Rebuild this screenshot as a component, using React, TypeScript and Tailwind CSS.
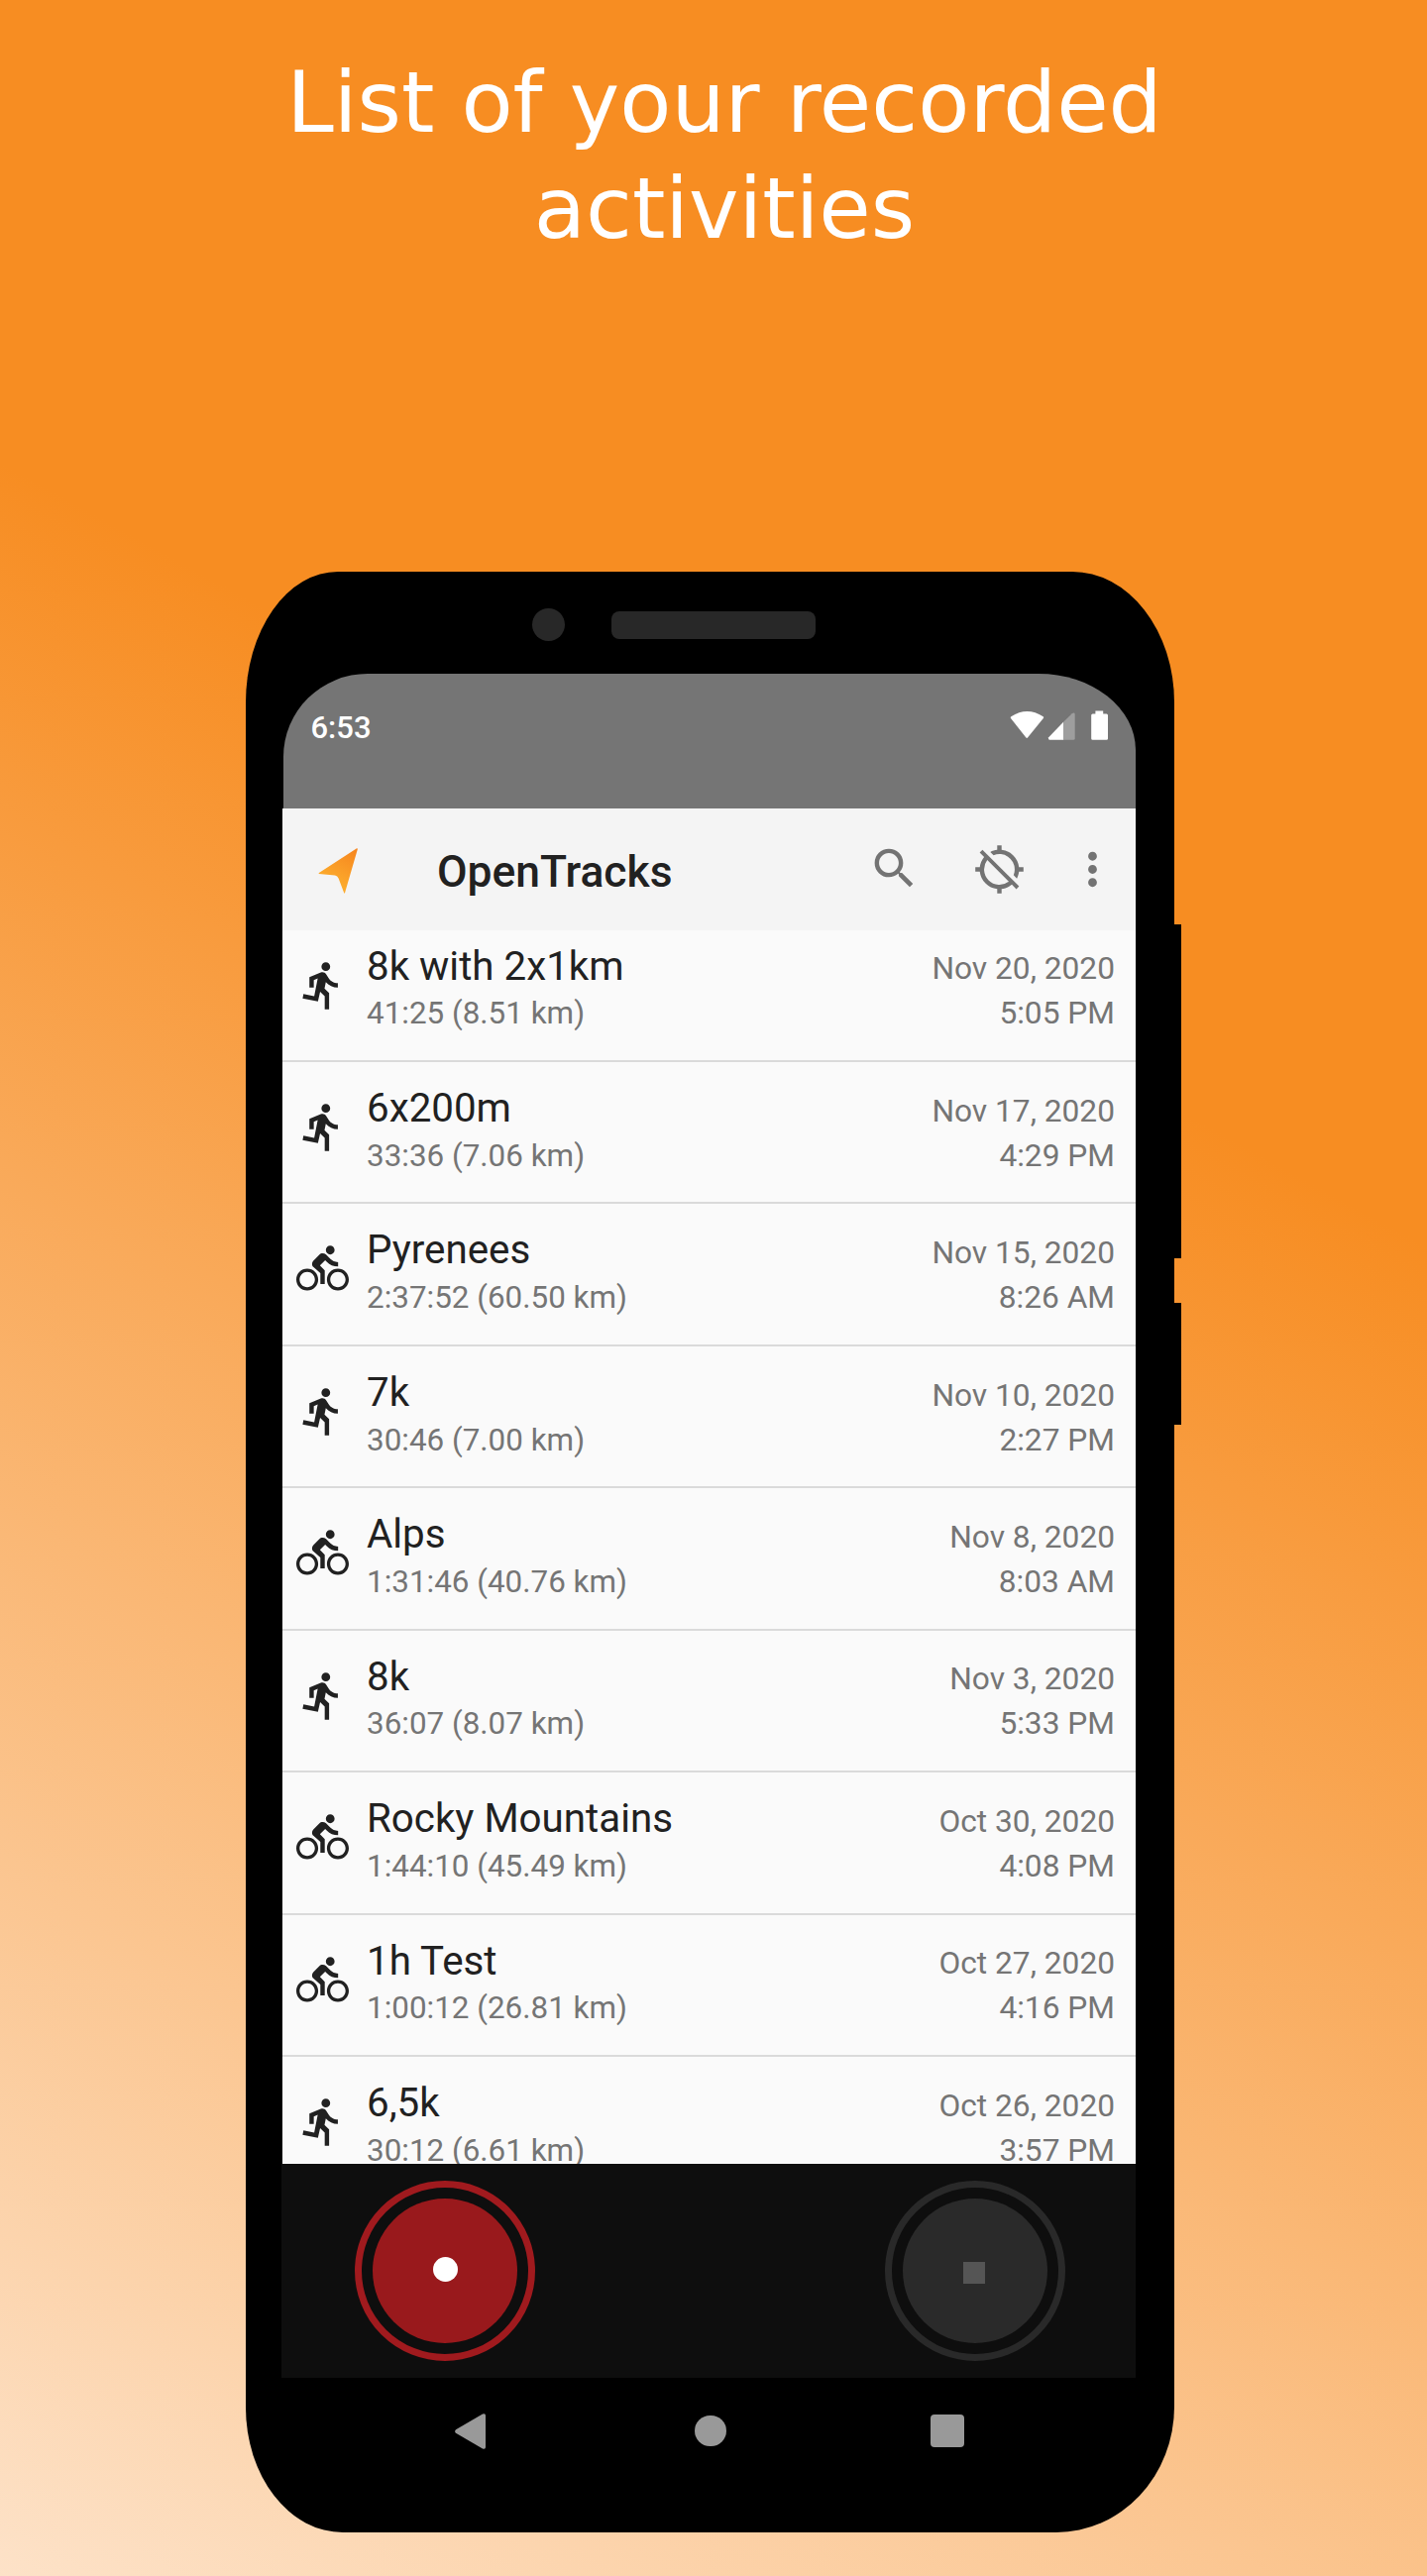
import { MdDirectionsBike, MdDirectionsRun, MdGpsOff, MdMoreVert, MdSearch } from "react-icons/md";

type Track = { sport: "run" | "bike"; name: string; stats: string; date: string; time: string };

const tracks: Track[] = [
  { sport: "run", name: "8k with 2x1km", stats: "41:25 (8.51 km)", date: "Nov 20, 2020", time: "5:05 PM" },
  { sport: "run", name: "6x200m", stats: "33:36 (7.06 km)", date: "Nov 17, 2020", time: "4:29 PM" },
  { sport: "bike", name: "Pyrenees", stats: "2:37:52 (60.50 km)", date: "Nov 15, 2020", time: "8:26 AM" },
  { sport: "run", name: "7k", stats: "30:46 (7.00 km)", date: "Nov 10, 2020", time: "2:27 PM" },
  { sport: "bike", name: "Alps", stats: "1:31:46 (40.76 km)", date: "Nov 8, 2020", time: "8:03 AM" },
  { sport: "run", name: "8k", stats: "36:07 (8.07 km)", date: "Nov 3, 2020", time: "5:33 PM" },
  { sport: "bike", name: "Rocky Mountains", stats: "1:44:10 (45.49 km)", date: "Oct 30, 2020", time: "4:08 PM" },
  { sport: "bike", name: "1h Test", stats: "1:00:12 (26.81 km)", date: "Oct 27, 2020", time: "4:16 PM" },
  { sport: "run", name: "6,5k", stats: "30:12 (6.61 km)", date: "Oct 26, 2020", time: "3:57 PM" },
];

function StatusIcons() {
  return (
    <svg width="100" height="30" viewBox="0 0 100 30" className="mt-[37px]" fill="#fff">
      <path d="M1.3 6.2Q17.5-4.2 33.7 6.2Q34.6 6.9 33.8 7.9L18 27.6Q17.2 28.4 16.4 27.6L1 7.9Q.3 6.9 1.3 6.2Z" />
      <path d="M54.3 11.5V29.8H40Q38.4 29.4 39.2 27.2Z" />
      <path d="M54.3 11.5L62.8 3.2Q65.5 1.6 65.7 4V28.5Q65.6 29.8 64.4 29.8H54.3Z" fill="#9e9e9e" />
      <path d="M86.4.5H94.2V3.6H97.6Q99 3.7 99 5V28.4Q99 29.8 97.6 29.8H83.6Q82.2 29.8 82.2 28.4V5Q82.2 3.7 83.6 3.6H86.4Z" />
    </svg>
  );
}

function Logo() {
  return (
    <svg width="40" height="46" viewBox="0 0 40 46" className="mt-[40px] ml-[36px] shrink-0">
      <defs>
        <linearGradient id="logo" x1="34" y1="0" x2="16" y2="34" gradientUnits="userSpaceOnUse">
          <stop offset="0" stopColor="#f6861f" />
          <stop offset="1" stopColor="#fcaa2c" />
        </linearGradient>
      </defs>
      <path d="M39 .3Q40 0 39.8 1.2L27 45.3Q26.6 46 26.2 45.3L20.6 30.5Q19.6 27.8 17 27.5L.9 26Q.2 25.5 .9 25Z" fill="url(#logo)" />
    </svg>
  );
}

function TrackRow({ track }: { track: Track }) {
  const Icon = track.sport === "run" ? MdDirectionsRun : MdDirectionsBike;
  return (
    <li className="flex h-[143.46px] shrink-0 border-b-2 border-[#dadada] pr-[20.5px] pl-[14px]">
      <Icon className="mt-[39px] size-[53px] shrink-0 text-[#212121]" />
      <div className="ml-[18px] flex-1 pt-[23px]">
        <div className="text-[40.3px] leading-[48px] text-[#212121]">{track.name}</div>
        <div className="mt-[5.7px] text-[31.4px] leading-[36px]">{track.stats}</div>
      </div>
      <div className="pt-[26.7px] text-right text-[31.7px] leading-[45px]">
        <div>{track.date}</div>
        <div>{track.time}</div>
      </div>
    </li>
  );
}

export default function App() {
  return (
    <main className="flex h-[2600px] w-[1440px] flex-col overflow-hidden bg-[linear-gradient(208.8deg,#f78d22_0%,#f78d22_37.1%,#fde2c8_100%)]">
      <h1 className="mt-[50px] h-[527px] w-[1462px] text-center font-['DejaVu_Sans'] text-[85.3px] leading-[107px] text-white">
        List of your recorded
        <br />
        activities
      </h1>

      <div className="ml-[248px] flex h-[1979px]">
        <section className="flex w-[937px] flex-col rounded-tl-[93px_132px] rounded-tr-[103px_132px] rounded-br-[119px_127px] rounded-bl-[98px_126px] bg-black font-['Roboto']">
          <div className="flex h-[103px] pt-[37px] pl-[289px]">
            <div className="size-[33px] rounded-full bg-[#282828]" />
            <div className="mt-[3px] ml-[47px] h-[27.5px] w-[206px] rounded-[8px] bg-[#282828]" />
          </div>

          <header className="ml-[37.5px] flex h-[135.5px] w-[860px] justify-between rounded-tl-[85px_84px] rounded-tr-[98px_77px] bg-[#757575] pr-[27px] pl-[28px]">
            <span className="mt-[37px] text-[31px] leading-[36px] font-medium text-white">6:53</span>
            <StatusIcons />
          </header>

          <nav className="ml-[37px] flex h-[123px] w-[860.5px] bg-[#f4f4f4] text-[#737373]">
            <Logo />
            <span className="mt-[38px] ml-[80px] w-[436px] shrink-0 text-[44.4px] leading-[52px] font-medium text-[#212121]">OpenTracks</span>
            <MdSearch className="mt-[34.5px] -ml-px size-[53px] shrink-0" />
            <MdGpsOff className="mt-[35px] ml-[53px] size-[53px] shrink-0" />
            <MdMoreVert className="mt-[35px] ml-[41px] size-[53px] shrink-0" />
          </nav>

          <ul className="ml-[37px] flex h-[1245.5px] w-[860.5px] flex-col overflow-hidden bg-[#fafafa] text-[#757575]">
            <li className="-mt-[10px]" />
            {tracks.map((track) => (
              <TrackRow key={track.name} track={track} />
            ))}
          </ul>

          <div className="ml-[36px] flex h-[216px] w-[861.5px] items-center bg-[#0e0e0e]">
            <div className="ml-[74px] flex size-[182px] items-center justify-center rounded-full border-[7.5px] border-[#a01a1e]">
              <div className="flex size-[146px] items-center justify-center rounded-full bg-[#99191c]">
                <div className="-mt-[3px] size-[25px] rounded-full bg-white" />
              </div>
            </div>
            <div className="ml-[353px] flex size-[182px] items-center justify-center rounded-full border-[7.5px] border-[#292929]">
              <div className="flex size-[146px] items-center justify-center rounded-full bg-[#2a2a2a]">
                <div className="mt-[3px] -ml-[3px] size-[22px] bg-[#555]" />
              </div>
            </div>
          </div>

          <div className="flex h-[107px] items-center pl-[211px]">
            <svg width="31" height="36" viewBox="0 0 31 36">
              <path d="M1 16.2L28 .5Q31-.6 31 2V34Q31 36.6 28 35.5L1 19.8Q-.8 18 1 16.2Z" fill="#999" />
            </svg>
            <div className="ml-[211px] size-[31.5px] rounded-full bg-[#999]" />
            <div className="ml-[206.8px] size-[33.5px] rounded-[4px] bg-[#999]" />
          </div>
        </section>

        <div className="w-[7px] pt-[356px]">
          <div className="h-[337px] bg-black" />
          <div className="mt-[45px] h-[123px] bg-black" />
        </div>
      </div>
    </main>
  );
}
